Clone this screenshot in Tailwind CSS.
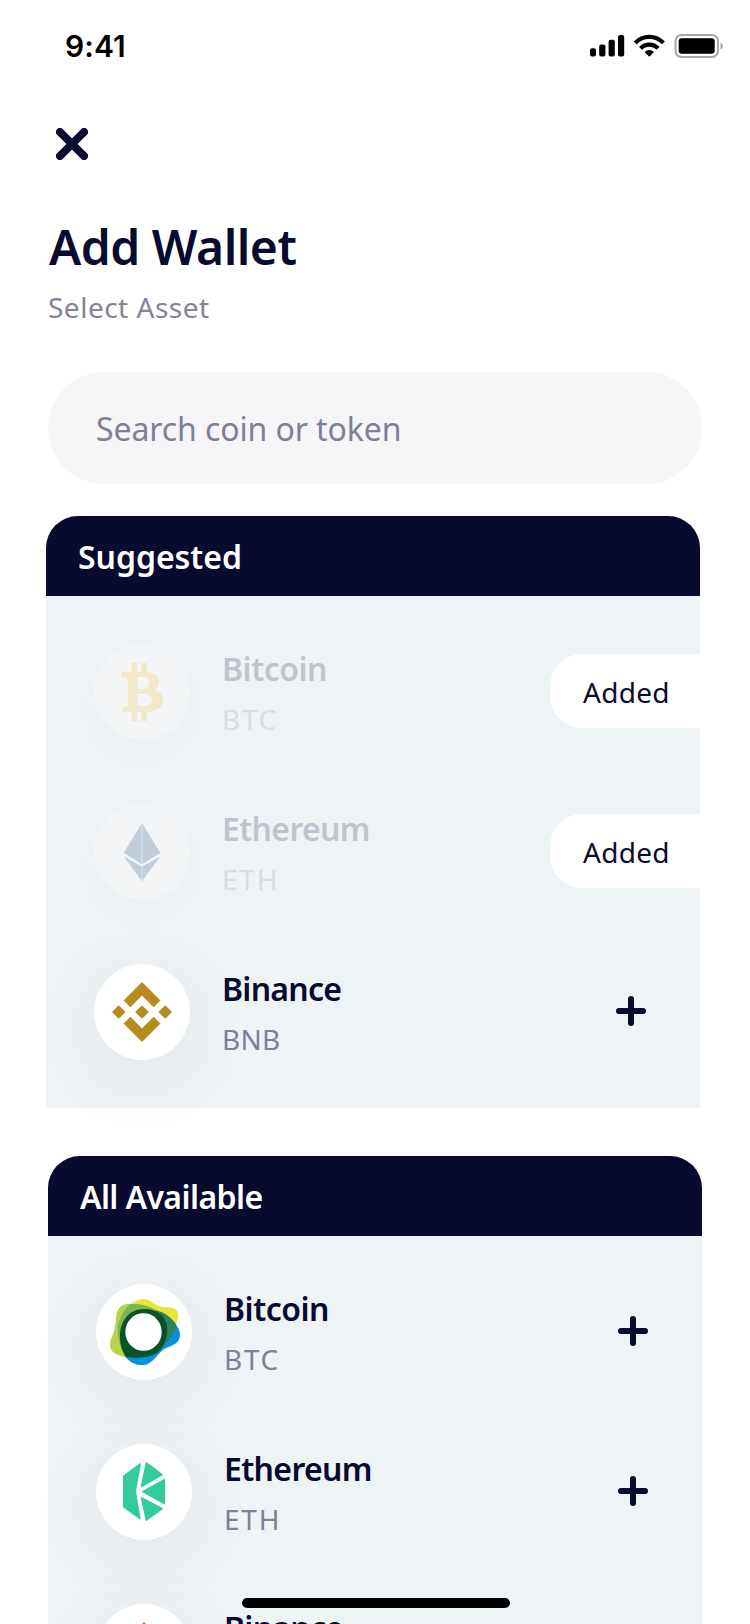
<!DOCTYPE html>
<html lang="en">
<head>
<meta charset="utf-8">
<title>Add Wallet</title>
<script src="https://cdn.jsdelivr.net/npm/@tailwindcss/browser@4"></script>
</head>
<body class="bg-white">
<svg class="hidden">
  <symbol id="plus" viewBox="0 0 30 30"><path d="M15 3v24M3 15h24" stroke="#080a2f" stroke-width="6" stroke-linecap="round"/></symbol>
  <symbol id="binance" viewBox="0 0 126.6 126.6"><path fill="#b88b1e" d="M38.7 53.2 63.3 28.6 87.9 53.2 102.2 38.9 63.3 0 24.4 38.9zM0 63.3 14.3 49 28.6 63.3 14.3 77.6zM38.7 73.4 63.3 98 87.9 73.4 102.2 87.7 63.3 126.6 24.4 87.7zM98 63.3 112.3 49 126.6 63.3 112.3 77.6zM77.8 63.3 63.3 48.8 48.8 63.3 63.3 77.8z"/></symbol>
</svg>
<div class="relative flex h-[1624px] w-[750px] flex-col overflow-hidden bg-white font-['Noto_Sans',sans-serif] text-[#080a2f]">

  <!-- Status bar -->
  <header class="flex h-[92px] shrink-0 items-center justify-between pl-[65px] pr-[27px]">
    <span class="font-['Inter',sans-serif] text-[30px] leading-[36px] font-semibold tracking-[0.1px] text-black">9:41</span>
    <svg class="h-[26px] w-[134px]" viewBox="0 0 134 26" fill="none">
      <g fill="#000">
        <rect x="1" y="15.3" width="6" height="8.2" rx="2"/>
        <rect x="10.2" y="11.5" width="6.2" height="12" rx="2"/>
        <rect x="19.6" y="6.7" width="6.2" height="16.8" rx="2"/>
        <rect x="29" y="2" width="6.2" height="21.5" rx="2"/>
      </g>
      <g stroke="#000" stroke-width="4.2">
        <path d="M46.2 9.9a19.6 19.6 0 0 1 28.2 0"/>
        <path d="M51.6 15.4a12 12 0 0 1 17.4 0"/>
      </g>
      <path d="M55.6 18.9a6.9 6.9 0 0 1 9.4 0L60.3 23.8z" fill="#000"/>
      <rect x="86.5" y="2" width="42.5" height="22" rx="6" stroke="#a6a6a6" stroke-width="2"/>
      <rect x="89.7" y="5.3" width="36" height="15.4" rx="3" fill="#000"/>
      <path d="M131.5 9.4c3 1.4 3 6 0 7.4z" fill="#a6a6a6"/>
    </svg>
  </header>

  <!-- Heading -->
  <section class="shrink-0 px-12 pt-9">
    <svg class="ml-2 h-8 w-8" viewBox="0 0 32 32"><path d="M4 4l24 24M28 4L4 28" stroke="#080a2f" stroke-width="8" stroke-linecap="round"/></svg>
    <h1 class="mt-[57px] ml-px text-[48px] leading-[60px] font-semibold tracking-[-0.5px]">Add Wallet</h1>
    <p class="mt-[10px] text-[28px] leading-[40px] tracking-[0.5px] text-[#83849a]">Select Asset</p>
  </section>

  <!-- Search -->
  <div class="mx-12 mt-[45px] flex h-28 shrink-0 items-center rounded-full bg-[#f6f6f9] pt-[2px] pl-12 text-[32px] leading-[40px] tracking-[-0.1px] text-[#7f7f97]">Search coin or token</div>

  <!-- Suggested -->
  <section class="mt-8 ml-[46px] w-[654px] shrink-0">
    <h2 class="flex h-20 items-center rounded-t-[32px] bg-[#080a2f] pt-[2px] pl-8 text-[32px] leading-[40px] font-semibold tracking-[-0.05px] text-white">Suggested</h2>
    <ul class="bg-[#eef3f6] py-4">
      <li class="flex h-40 items-center pl-12">
        <div class="grid h-24 w-24 place-items-center rounded-full bg-[#f3f5f7] shadow-[0_16px_64px_rgba(0,0,0,0.014)]">
          <svg class="h-24 w-24" viewBox="0 0 288 288">
            <path fill="#f1e8c8" fill-rule="evenodd" d="M82 84H113V57H129V84H142V57H158V84C184 86 196 96 196 113C196 125 190 134 180 138C197 142 207 152 207 168C207 190 190 203 158 204V231H142V204H129V231H113V204H83L86 187H96Q102 187 102 181V107Q102 101 95 101H82ZM130 99V134H146C160 134 167 128 167 116C167 105 160 99 146 99ZM130 150V186H148C165 186 174 180 174 168C174 156 165 150 148 150Z"/>
          </svg>
        </div>
        <div class="ml-8 pt-[4px] opacity-20">
          <p class="text-[32px] leading-[40px] font-semibold tracking-[-0.5px]">Bitcoin</p>
          <p class="mt-[10px] text-[28px] leading-[40px] tracking-[1.7px] text-[#7f8099]">BTC</p>
        </div>
        <span class="mt-[-2px] ml-auto flex h-[74px] w-[150px] items-center rounded-l-[32px] bg-white pt-px pl-[33px] text-[28px] leading-[40px] tracking-[0.3px]">Added</span>
      </li>
      <li class="flex h-40 items-center pl-12">
        <div class="grid h-24 w-24 place-items-center rounded-full bg-[#f3f5f7] shadow-[0_16px_64px_rgba(0,0,0,0.014)]">
          <svg class="h-24 w-24" viewBox="0 0 288 288">
            <path fill="#c1ceda" d="M144 57 199 147 144 181 89 147zM89 157 144 188 199 157 144 232z"/>
            <path stroke="#d3dde5" stroke-width="5" d="M144 60V180M144 189V230"/>
          </svg>
        </div>
        <div class="ml-8 pt-[4px] opacity-20">
          <p class="text-[32px] leading-[40px] font-semibold tracking-[-0.65px]">Ethereum</p>
          <p class="mt-[10px] text-[28px] leading-[40px] tracking-[1.8px] text-[#7f8099]">ETH</p>
        </div>
        <span class="mt-[-2px] ml-auto flex h-[74px] w-[150px] items-center rounded-l-[32px] bg-white pt-px pl-[33px] text-[28px] leading-[40px] tracking-[0.3px]">Added</span>
      </li>
      <li class="flex h-40 items-center pl-12">
        <div class="grid h-24 w-24 place-items-center rounded-full bg-white shadow-[0_16px_80px_rgba(9,0,12,0.07)]"><svg class="h-[60px] w-[60px]"><use href="#binance"/></svg></div>
        <div class="ml-8 pt-[4px]">
          <p class="text-[32px] leading-[40px] font-semibold tracking-[-0.75px]">Binance</p>
          <p class="mt-[10px] text-[28px] leading-[40px] tracking-[0.3px] text-[#7f8099]">BNB</p>
        </div>
        <svg class="mt-[-2px] mr-[54px] ml-auto h-[30px] w-[30px]"><use href="#plus"/></svg>
      </li>
    </ul>
  </section>

  <!-- All available -->
  <section class="mt-12 ml-12 w-[654px] shrink-0">
    <h2 class="flex h-20 items-center rounded-t-[32px] bg-[#080a2f] pt-[2px] pl-8 text-[32px] leading-[40px] font-semibold tracking-[-0.6px] text-white">All Available</h2>
    <ul class="bg-[#eef3f6] py-4">
      <li class="flex h-40 items-center pl-12">
        <svg class="h-24 w-24 rounded-full bg-white shadow-[0_16px_80px_rgba(9,0,12,0.07)]" viewBox="0 0 288 288">
          <path fill="#ebe635" d="M101 60C112 55 128 45 144 45C164 45 172 62 190 67C206 71 226 68 238 76C252 86 245 106 240 122L200 130Z"/>
          <path fill="#b9d24b" d="M104 60C84 58 70 66 64 82C58 98 61 116 55 138C49 160 42 166 42 182C43 208 62 212 90 220L140 150L120 64Z"/>
          <path fill="#0593db" d="M240 122C248 133 253 141 252 156C248 183 226 183 206 194C186 206 168 243 143 243C118 243 104 237 88 218L180 160Z"/>
          <path fill="#7ab752" d="M102 60C130 58 154 66 176 79L120 120L78 196C68 172 61 142 69 114C76 91 88 74 102 60Z"/>
          <path fill="#2e8260" d="M150 75L178 78C204 84 226 100 241 122C238 153 214 170 186 205L160 140Z"/>
          <path fill="#7ab752" d="M102 60C128 58 158 64 182 79L140 90L100 100Z"/>
          <path fill="#0a5328" d="M144 75C186 75 214 99 214 138C214 164 202 190 186 205C172 216 152 220 130 221C114 222 100 221 90 219C80 204 72 186 72 158C72 108 102 75 144 75Z"/>
          <ellipse fill="#fff" cx="142.5" cy="144" rx="54.5" ry="56.5"/>
        </svg>
        <div class="ml-8 pt-[4px]">
          <p class="text-[32px] leading-[40px] font-semibold tracking-[-0.5px]">Bitcoin</p>
          <p class="mt-[10px] text-[28px] leading-[40px] tracking-[1.7px] text-[#7f8099]">BTC</p>
        </div>
        <svg class="mt-[-2px] mr-[54px] ml-auto h-[30px] w-[30px]"><use href="#plus"/></svg>
      </li>
      <li class="flex h-40 items-center pl-12">
        <svg class="h-24 w-24 rounded-full bg-white shadow-[0_16px_80px_rgba(9,0,12,0.07)]" viewBox="0 0 288 288">
          <path fill="#33cb9e" stroke="#33cb9e" stroke-width="4" stroke-linejoin="round" d="M83 96 133 59 118 142 132 224 83 189zM151 56 199 92 136 128zM205 107V179L140 143zM136 161 199 194 151 229z"/>
        </svg>
        <div class="ml-8 pt-[4px]">
          <p class="text-[32px] leading-[40px] font-semibold tracking-[-0.65px]">Ethereum</p>
          <p class="mt-[10px] text-[28px] leading-[40px] tracking-[1.8px] text-[#7f8099]">ETH</p>
        </div>
        <svg class="mt-[-2px] mr-[54px] ml-auto h-[30px] w-[30px]"><use href="#plus"/></svg>
      </li>
      <li class="flex h-40 items-center pl-12">
        <div class="grid h-24 w-24 place-items-center rounded-full bg-white shadow-[0_16px_80px_rgba(9,0,12,0.07)]"><svg class="h-[60px] w-[60px]"><use href="#binance"/></svg></div>
        <div class="ml-8 pt-[3px] pb-[51px]">
          <p class="text-[32px] leading-[40px] font-semibold tracking-[-0.75px]">Binance</p>
        </div>
      </li>
    </ul>
  </section>

  <!-- Home indicator -->
  <div class="absolute bottom-4 left-[242px] h-[10px] w-[268px] rounded-full bg-black"></div>
</div>
</body>
</html>
